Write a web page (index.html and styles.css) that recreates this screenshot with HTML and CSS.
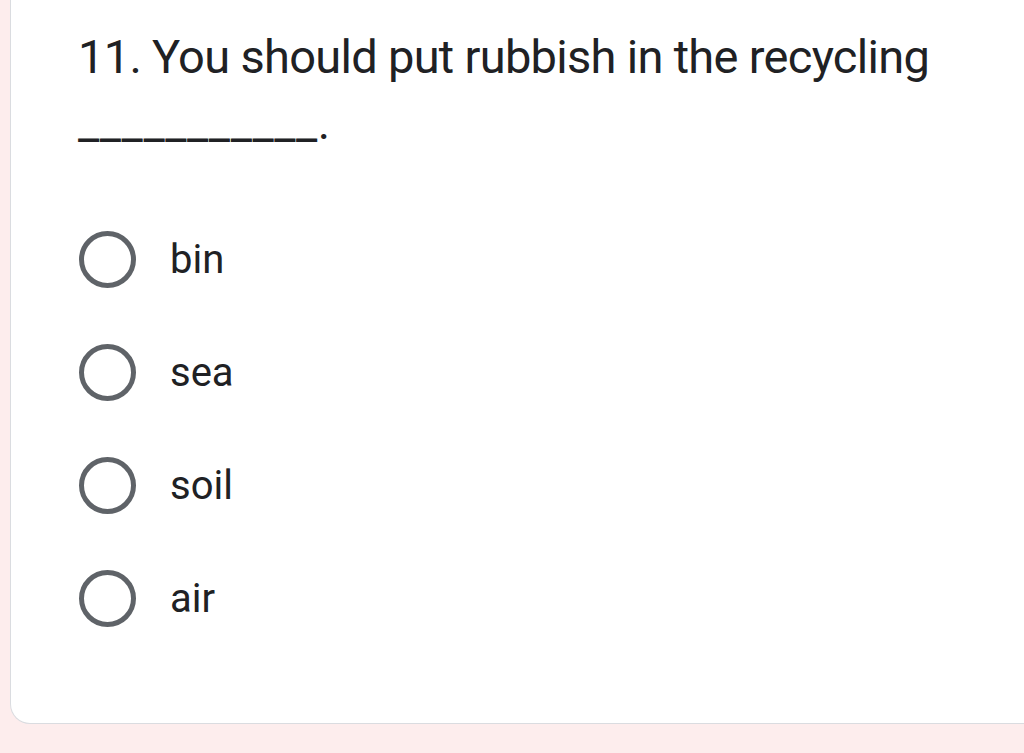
FILE: index.html
```html
<!DOCTYPE html>
<html>
<head>
<meta charset="utf-8">
<link rel="stylesheet" href="styles.css">
</head>
<body>
<div class="card">
  <div class="question">11. You should put rubbish in the recycling<br><span class="blank">___________.</span></div>
  <div class="options">
    <div class="option"><span class="radio"></span><span class="label">bin</span></div>
    <div class="option"><span class="radio"></span><span class="label">sea</span></div>
    <div class="option"><span class="radio"></span><span class="label">soil</span></div>
    <div class="option"><span class="radio"></span><span class="label">air</span></div>
  </div>
</div>
</body>
</html>
```
FILE: styles.css
```css
html, body {
  margin: 0;
  padding: 0;
  background: #fdeded;
  overflow: hidden;
  height: 753px;
}
.card {
  margin: -20px -30px 0 10px;
  padding: 44px 0 68px 67px;
  background: #ffffff;
  border: 1px solid #dadce0;
  border-top: none;
  border-radius: 0 0 0 20px;
}
.question {
  font-family: Roboto, "Liberation Sans", sans-serif;
  font-size: 47px;
  line-height: 66px;
  letter-spacing: -0.7px;
  color: #202124;
  white-space: nowrap;
}
.blank {
  letter-spacing: 0.6px;
}
.options {
  margin-top: 47px;
  display: flex;
  flex-direction: column;
}
.option {
  height: 113px;
  display: flex;
  align-items: center;
}
.radio {
  box-sizing: border-box;
  width: 57px;
  height: 57px;
  border: 5px solid #5f6368;
  border-radius: 50%;
  margin-left: 1px;
  flex: none;
}
.label {
  margin-left: 34px;
  font-family: Roboto, "Liberation Sans", sans-serif;
  font-size: 40px;
  color: #202124;
}
```
